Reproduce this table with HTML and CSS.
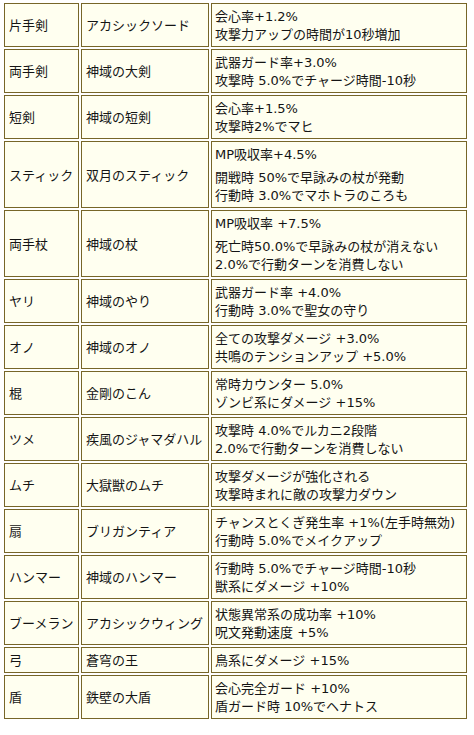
FILE: index.html
```html
<!DOCTYPE html>
<html lang="ja">
<head>
<meta charset="utf-8">
<link rel="stylesheet" href="styles.css">
</head>
<body>
<table class="tbl">
<colgroup><col class="c1"><col class="c2"><col class="c3"></colgroup>
<tr><td>片手剣</td><td>アカシックソード</td><td class="d"><div>会心率+1.2%</div><div>攻撃力アップの時間が10秒増加</div></td></tr>
<tr><td>両手剣</td><td>神域の大剣</td><td class="d"><div>武器ガード率+3.0%</div><div>攻撃時 5.0%でチャージ時間-10秒</div></td></tr>
<tr><td>短剣</td><td>神域の短剣</td><td class="d"><div>会心率+1.5%</div><div>攻撃時2%でマヒ</div></td></tr>
<tr><td>スティック</td><td>双月のスティック</td><td class="d"><div class="first">MP吸収率+4.5%</div><div>開戦時 50%で早詠みの杖が発動</div><div>行動時 3.0%でマホトラのころも</div></td></tr>
<tr><td>両手杖</td><td>神域の杖</td><td class="d"><div class="first">MP吸収率 +7.5%</div><div>死亡時50.0%で早詠みの杖が消えない</div><div>2.0%で行動ターンを消費しない</div></td></tr>
<tr><td>ヤリ</td><td>神域のやり</td><td class="d"><div>武器ガード率 +4.0%</div><div>行動時 3.0%で聖女の守り</div></td></tr>
<tr><td>オノ</td><td>神域のオノ</td><td class="d"><div>全ての攻撃ダメージ +3.0%</div><div>共鳴のテンションアップ +5.0%</div></td></tr>
<tr><td>棍</td><td>金剛のこん</td><td class="d"><div>常時カウンター 5.0%</div><div>ゾンビ系にダメージ +15%</div></td></tr>
<tr><td>ツメ</td><td>疾風のジャマダハル</td><td class="d"><div>攻撃時 4.0%でルカニ2段階</div><div>2.0%で行動ターンを消費しない</div></td></tr>
<tr><td>ムチ</td><td>大獄獣のムチ</td><td class="d"><div>攻撃ダメージが強化される</div><div>攻撃時まれに敵の攻撃力ダウン</div></td></tr>
<tr><td>扇</td><td>ブリガンティア</td><td class="d"><div>チャンスとくぎ発生率 +1%(左手時無効)</div><div>行動時 5.0%でメイクアップ</div></td></tr>
<tr><td>ハンマー</td><td>神域のハンマー</td><td class="d"><div>行動時 5.0%でチャージ時間-10秒</div><div>獣系にダメージ +10%</div></td></tr>
<tr><td>ブーメラン</td><td>アカシックウィング</td><td class="d"><div>状態異常系の成功率 +10%</div><div>呪文発動速度 +5%</div></td></tr>
<tr><td>弓</td><td>蒼穹の王</td><td class="d"><div>鳥系にダメージ +15%</div></td></tr>
<tr><td>盾</td><td>鉄壁の大盾</td><td class="d"><div>会心完全ガード +10%</div><div>盾ガード時 10%でヘナトス</div></td></tr>
</table>
</body>
</html>
```

FILE: styles.css
```css
html, body {
  margin: 0;
  padding: 0;
  background: #ffffff;
}
body {
  font-family: "DejaVu Sans", "Noto Sans CJK JP", sans-serif;
  font-size: 13px;
  color: #141414;
}
.tbl {
  table-layout: fixed;
  width: 467px;
  margin: 1px 0 0 2px;
  border-collapse: separate;
  border-spacing: 2px;
}
.c1 { width: 75px; }
.c2 { width: 128px; }
.c3 { width: 256px; }
.tbl td {
  border: 1px solid #776628;
  background: #fffff0;
  padding: 4px 2px 2px 4px;
  line-height: 18px;
  white-space: nowrap;
  overflow: hidden;
  vertical-align: middle;
}
.tbl td.d {
  padding-left: 3px;
}
.tbl td.d .first {
  margin-bottom: 5px;
}
```
